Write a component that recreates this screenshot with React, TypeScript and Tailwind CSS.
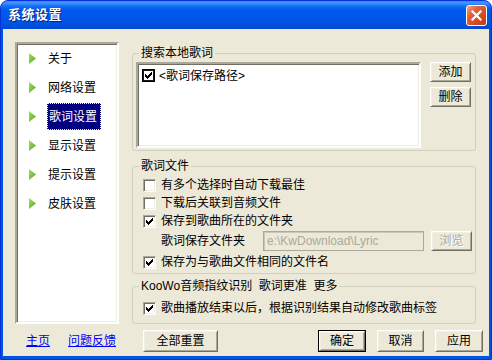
import clsx from "clsx";

const navItems = ["关于", "网络设置", "歌词设置", "显示设置", "提示设置", "皮肤设置"];

const CheckMark = () => (
  <svg width="7" height="7" viewBox="0 0 7 7" className="block" shapeRendering="crispEdges">
    <path
      d="M6 0h1v1h-1z M5 1h2v1h-2z M0 2h1v1h-1z M4 2h3v1h-3z M0 3h2v1h-2z M3 3h3v1h-3z M0 4h5v1h-5z M1 5h3v1h-3z M2 6h1v1h-1z"
      fill="#000"
    />
  </svg>
);

const CheckBox = ({ checked }: { checked?: boolean }) => (
  <span className="w-[13px] h-[13px] shrink-0 bg-white flex items-center justify-center border border-t-[#ACA899] border-l-[#ACA899] border-r-white border-b-white shadow-[inset_1px_1px_0_#716F64,inset_-1px_-1px_0_#F1EFE2]">
    {checked && <CheckMark />}
  </span>
);

const FlatCheckBox = () => (
  <span className="w-[13px] h-[13px] shrink-0 bg-white flex items-center justify-center border border-black shadow-[inset_0_0_0_1px_#1a1a1a]">
    <CheckMark />
  </span>
);

const Btn = ({ children, className, isDefault, disabled }: { children: React.ReactNode; className?: string; isDefault?: boolean; disabled?: boolean }) => (
  <button
    className={clsx(
      "bg-[#ECE9D8] text-[12px] leading-[14px] flex items-center justify-center shrink-0",
      isDefault ? "border border-black" : "",
      disabled ? "text-[#ACA899] [text-shadow:1px_1px_0_#fff]" : "text-black",
      className
    )}
  >
    <span className="w-full h-full flex items-center justify-center border border-t-white border-l-white border-r-[#716F64] border-b-[#716F64] shadow-[inset_1px_1px_0_#F1EFE2,inset_-1px_-1px_0_#ACA899]">
      {children}
    </span>
  </button>
);

const Sunken = "border-2 border-t-[#ACA899] border-l-[#ACA899] border-r-white border-b-white shadow-[inset_1px_1px_0_#716F64,inset_-1px_-1px_0_#F1EFE2]";

const Arrow = () => (
  <svg width="7" height="11" viewBox="0 0 7 11" className="block shrink-0">
    <defs>
      <linearGradient id="ag" x1="0" y1="0" x2="1" y2="1">
        <stop offset="0" stopColor="#A6E05A" />
        <stop offset="1" stopColor="#4FA52A" />
      </linearGradient>
    </defs>
    <polygon points="0,0 7,5.5 0,11" fill="url(#ag)" />
  </svg>
);

const NavPanel = () => (
  <div className={clsx("mt-[13px] ml-[12px] w-[104px] h-[282px] bg-white shrink-0 flex flex-col pl-[12px]", Sunken)}>
    {navItems.map((item) => (
      <div key={item} className="h-[29px] flex items-center">
        <Arrow />
        <span
          className={clsx(
            "ml-[11px] h-[27px] w-[54px] pl-[1px] flex items-center text-[12px] leading-[14px]",
            item === "歌词设置" ? "bg-[#000080] text-white border border-dotted border-[#FFFF80] pl-0" : "text-black"
          )}
        >
          {item}
        </span>
      </div>
    ))}
  </div>
);

const Group = ({ title, className, children }: { title: string; className?: string; children: React.ReactNode }) => (
  <fieldset className={clsx("border border-[#D0D0BF] rounded-[3px] m-0 p-0", className)}>
    <legend className="ml-[6px] px-[2px] text-[12px] leading-[14px] whitespace-pre text-black">{title}</legend>
    {children}
  </fieldset>
);

const Row = ({ label, checked, className }: { label: string; checked?: boolean; className?: string }) => (
  <div className={clsx("flex items-center h-[18px]", className)}>
    <CheckBox checked={checked} />
    <span className="ml-[5px] text-[12px] leading-[14px]">{label}</span>
  </div>
);

const App = () => {
  return (
    <div className="w-[492px] h-[360px] bg-white font-['Liberation_Sans','Noto_Sans_CJK_SC',sans-serif]">
      <div className="h-full flex flex-col rounded-t-[8px] bg-[#0054E3] border border-[#0831D9] overflow-hidden">
        <div className="h-[28px] shrink-0 flex items-center pl-[7px] pr-[4px] bg-[linear-gradient(180deg,#3A8CFF_0px,#3D95FF_2px,#1570F5_5px,#0058EE_9px,#0055E7_18px,#0052DF_24px,#0047D2_28px)]">
          <span className="text-white text-[13px] font-bold leading-[16px] tracking-[0.5px] [text-shadow:1px_1px_0_#0A1E7C]">系统设置</span>
          <div className="ml-auto w-[21px] h-[21px] rounded-[3px] border border-white bg-[linear-gradient(135deg,#F3A58A_0%,#E3643E_30%,#D8471D_70%,#C03A12_100%)] flex items-center justify-center">
            <svg width="11" height="11" viewBox="0 0 11 11" className="block">
              <path d="M1.5 1.5 L9.5 9.5 M9.5 1.5 L1.5 9.5" stroke="#fff" strokeWidth="2.2" strokeLinecap="square" />
            </svg>
          </div>
        </div>

        <div className="flex-1 mx-[2px] mb-[3px] bg-[#ECE9D8] flex flex-col text-black">
          <div className="flex">
            <NavPanel />
            <div className="ml-[13px] pt-[17px] w-[344px] flex flex-col">
              <Group title="搜索本地歌词">
                <div className="flex pl-[3px] pt-[2px] pb-[2px]">
                  <div className={clsx("w-[285px] h-[86px] bg-white pl-[4px] pt-[5px]", Sunken)}>
                    <div className="flex items-center h-[13px]">
                      <FlatCheckBox />
                      <span className="ml-[4px] text-[12px] leading-[14px]">&lt;歌词保存路径&gt;</span>
                    </div>
                  </div>
                  <div className="ml-[9px] flex flex-col gap-[5px]">
                    <Btn className="w-[41px] h-[20px]">添加</Btn>
                    <Btn className="w-[41px] h-[20px]">删除</Btn>
                  </div>
                </div>
              </Group>

              <Group title="歌词文件" className="mt-[8px]">
                <div className="pl-[10px] pt-[3px] pb-[2px] flex flex-col">
                  <Row label="有多个选择时自动下载最佳" />
                  <Row label="下载后关联到音频文件" />
                  <Row label="保存到歌曲所在的文件夹" checked />
                  <div className="flex items-center h-[20px] mt-[1px]">
                    <span className="ml-[18px] w-[102px] text-[12px] leading-[14px]">歌词保存文件夹</span>
                    <div className="w-[161px] h-[20px] flex items-center pl-[3px] border border-[#ACA899] shadow-[inset_1px_1px_0_#C9C7BA] bg-[#ECE9D8] text-[12px] leading-[14px] text-[#ACA899]">
                      e:\KwDownload\Lyric
                    </div>
                    <Btn className="ml-[7px] w-[41px] h-[20px]" disabled>
                      浏览
                    </Btn>
                  </div>
                  <Row label="保存为与歌曲文件相同的文件名" checked className="mt-[2px]" />
                </div>
              </Group>

              <Group title="KooWo音频指纹识别  歌词更准  更多" className="mt-[5px]">
                <div className="pl-[10px] pt-[6px] pb-[6px]">
                  <Row label="歌曲播放结束以后，根据识别结果自动修改歌曲标签" checked />
                </div>
              </Group>
            </div>
          </div>

          <div className="flex items-center mt-[6px] h-[22px] pr-[6px] text-[12px] leading-[14px]">
            <a className="ml-[23px] text-[#0000FF] underline">主页</a>
            <a className="ml-[18px] text-[#0000FF] underline">问题反馈</a>
            <Btn className="ml-[27px] w-[75px] h-[22px]">全部重置</Btn>
            <Btn className="ml-auto w-[48px] h-[22px]" isDefault>
              确定
            </Btn>
            <Btn className="ml-[11px] w-[47px] h-[22px]">取消</Btn>
            <Btn className="ml-[11px] w-[48px] h-[22px]">应用</Btn>
          </div>
        </div>
      </div>
    </div>
  );
};

export default App;
